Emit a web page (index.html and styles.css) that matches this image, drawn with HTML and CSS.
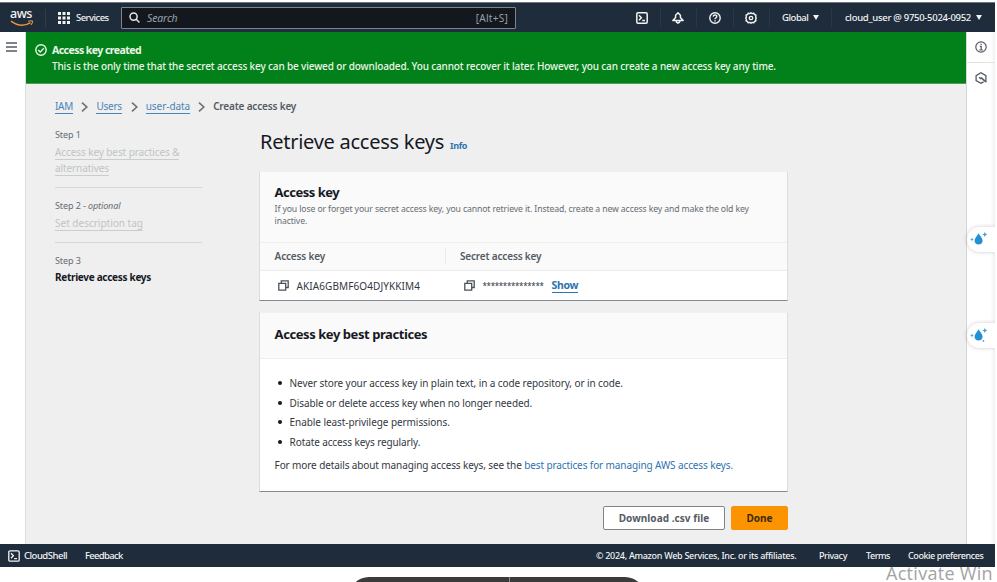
FILE: index.html
```html
<!DOCTYPE html>
<html lang="en">
<head>
<meta charset="utf-8">
<title>Create access key | IAM</title>
<link rel="stylesheet" href="styles.css">
</head>
<body>
<header class="topnav">
  <div class="nav-logo">
    <span class="aws">aws</span>
    <svg class="smile" viewBox="0 0 24 8" width="24" height="8"><path d="M1 1.2Q11 8.5 20.5 2.6" fill="none" stroke="#e8963a" stroke-width="1.6"/><path d="M18 1.2Q21.5.4 22.6 1.2Q22.6 3 21 5" fill="none" stroke="#e8963a" stroke-width="1.1"/></svg>
  </div>
  <div class="nav-services">
    <svg viewBox="0 0 12 12" width="12" height="12" fill="#f2f3f3"><path d="M0 0h3v3H0zM4.5 0h3v3h-3zM9 0h3v3H9zM0 4.5h3v3H0zM4.5 4.5h3v3h-3zM9 4.5h3v3H9zM0 9h3v3H0zM4.5 9h3v3h-3zM9 9h3v3H9z"/></svg>
    <span>Services</span>
  </div>
  <div class="search">
    <svg viewBox="0 0 12 12" width="11" height="11" fill="none" stroke="#e4e8ea" stroke-width="1.6"><circle cx="5" cy="5" r="3.9"/><path d="M7.8 7.8l3.6 3.6"/></svg>
    <span class="search-ph">Search</span>
    <span class="search-key">[Alt+S]</span>
  </div>
  <div class="nav-icon first"><svg viewBox="0 0 12 12" width="12" height="12" fill="none" stroke="#f2f3f3" stroke-width="1.5"><rect x=".8" y=".8" width="10.4" height="10.4" rx="1.2"/><path d="M3 3.3l2.4 2.4L3 8.2M6.2 8.6h2.8"/></svg></div>
  <div class="nav-icon"><svg viewBox="0 0 12 12" width="12" height="12" fill="none" stroke="#f2f3f3" stroke-width="1.5" stroke-linejoin="round"><path d="M6 .8L3.6 3.2V5.400L.9 8.600h10.200L8.400 5.400V3.200z"/><path d="M4.400 9v1.100L6 11.200l1.600-1.100V9"/></svg></div>
  <div class="nav-icon"><svg viewBox="0 0 12 12" width="12" height="12" fill="none" stroke="#f2f3f3" stroke-width="1.4"><circle cx="6" cy="6" r="5.2"/><path d="M4.200 4.600c.1-2.200 3.600-2.200 3.600-.1C7.800 5.800 6 5.700 6 7.200M6 8.200v1.300"/></svg></div>
  <div class="nav-icon"><svg viewBox="0 0 12 12" width="12" height="12" fill="none" stroke="#f2f3f3"><path stroke-width="1.400" stroke-linejoin="round" d="M6 .7l1.200.9 1.600-.4.700 1.300 1.500.7-.4 1.600.7 1.200-.7 1.200.4 1.600-1.500.7-.7 1.300-1.600-.4L6 11.300l-1.200-.9-1.600.4-.7-1.300L1 8.800l.4-1.600L.7 6l.7-1.200L1 3.200l1.500-.7.7-1.300 1.600.4z"/><circle cx="6" cy="6" r="1.700" stroke-width="1.300"/></svg></div>
  <div class="nav-region"><span>Global</span><i class="caret"></i></div>
  <div class="nav-account"><span>cloud_user @ 9750-5024-0952</span><i class="caret"></i></div>
</header>

<div class="shell">
  <aside class="rail-left">
    <svg viewBox="0 0 11 10" width="11" height="10" stroke="#545b64" stroke-width="1.400"><path d="M0 1h11M0 5h11M0 9h11"/></svg>
  </aside>
  <main class="content">
    <section class="flash">
      <svg viewBox="0 0 12 12" width="12" height="12" fill="none" stroke="#e9f7e4" stroke-width="1.400"><circle cx="6" cy="6" r="5.200"/><path d="M3.200 6.100l2 2 3.600-3.900"/></svg>
      <div>
        <div class="flash-title">Access key created</div>
        <div class="flash-text">This is the only time that the secret access key can be viewed or downloaded. You cannot recover it later. However, you can create a new access key any time.</div>
      </div>
    </section>

    <nav class="crumbs">
      <a class="c-iam">IAM</a>
      <svg class="chev" viewBox="0 0 7 10" width="7" height="10"><path d="M1 .7l4.800 4.300L1 9.300"/></svg>
      <a class="c-users">Users</a>
      <svg class="chev" viewBox="0 0 7 10" width="7" height="10"><path d="M1 .7l4.800 4.300L1 9.300"/></svg>
      <a class="c-user">user-data</a>
      <svg class="chev" viewBox="0 0 7 10" width="7" height="10"><path d="M1 .7l4.800 4.300L1 9.300"/></svg>
      <span class="c-here">Create access key</span>
    </nav>

    <div class="columns">
      <ol class="steps">
        <li>
          <div class="step-no">Step 1</div>
          <div class="step-link"><span>Access key best practices &amp;<br>alternatives</span></div>
        </li>
        <li>
          <div class="step-no">Step 2 - <em>optional</em></div>
          <div class="step-link tag"><span>Set description tag</span></div>
        </li>
        <li>
          <div class="step-no">Step 3</div>
          <div class="step-now">Retrieve access keys</div>
        </li>
      </ol>

      <div class="panel">
        <div class="title-row"><h1>Retrieve access keys</h1><a>Info</a></div>

        <section class="card keys">
          <div class="keys-head">
            <h2>Access key</h2>
            <p>If you lose or forget your secret access key, you cannot retrieve it. Instead, create a new access key and make the old key<br>inactive.</p>
          </div>
          <div class="row th"><div class="col-a">Access key</div><div class="col-b">Secret access key</div></div>
          <div class="row td">
            <div class="col-a">
              <svg class="copy" viewBox="0 0 11 11" width="11" height="11"><path d="M3.300 3V.8h6.900v6.700H8M.8 3.300h6.900v6.900H.8z"/></svg>
              <span class="key-id">AKIA6GBMF6O4DJYKKIM4</span>
            </div>
            <div class="col-b">
              <svg class="copy" viewBox="0 0 11 11" width="11" height="11"><path d="M3.300 3V.8h6.900v6.700H8M.8 3.300h6.900v6.900H.8z"/></svg>
              <span class="mask">***************</span>
              <a class="show">Show</a>
            </div>
          </div>
        </section>

        <section class="card practices">
          <h2>Access key best practices</h2>
          <div class="practices-body">
            <ul>
              <li class="p1">Never store your access key in plain text, in a code repository, or in code.</li>
              <li>Disable or delete access key when no longer needed.</li>
              <li class="p3">Enable least-privilege permissions.</li>
              <li>Rotate access keys regularly.</li>
            </ul>
            <p>For more details about managing access keys, see the <a>best practices for managing AWS access keys.</a></p>
          </div>
        </section>

        <div class="actions"><button class="btn">Download .csv file</button><button class="btn primary">Done</button></div>
      </div>
    </div>
  </main>
  <aside class="rail-right">
    <div class="rail-cell"><svg viewBox="0 0 12 12" width="12" height="12" fill="none" stroke="#545b64" stroke-width="1.200"><circle cx="6" cy="6" r="5.200"/><path d="M4.800 5.300H6.200V9M4.300 9h3.600M6.100 2.700v1.400"/></svg></div>
    <div class="rail-cell last"><svg viewBox="0 0 12 12" width="12" height="12" fill="none" stroke="#545b64" stroke-width="1.300"><path d="M10.900 10.200V3.600L6 .8 1.100 3.600v4.900L6 11.200l2.600-1.300"/><path d="M4.200 5.200L6 7M6 5.600l4.900 4.200" stroke-width="1.600"/></svg></div>
    <div class="bubble b1"><svg viewBox="0 0 18 14" width="18" height="14"><path d="M8.600 1.600C7.100 4 4.600 6.300 4.600 8.800c0 2.400 1.600 3.700 4 3.700s4-1.300 4-3.700C12.600 6.300 10.100 4 8.600 1.600z" fill="#2490d0"/><path d="M14.800 0l.8 1.700 1.700.8-1.700.8-.8 1.700-.8-1.700-1.700-.8 1.700-.8zM2 5.600l.6 1.300 1.300.6-1.300.6L2 9.400l-.6-1.300L.1 7.500l1.300-.6z" fill="#3e9fd8"/></svg></div>
    <div class="bubble b2"><svg viewBox="0 0 18 14" width="18" height="14"><path d="M8.600 1.600C7.100 4 4.600 6.300 4.600 8.800c0 2.400 1.600 3.700 4 3.700s4-1.300 4-3.700C12.600 6.300 10.100 4 8.600 1.600z" fill="#2490d0"/><path d="M14.800 0l.8 1.700 1.700.8-1.700.8-.8 1.700-.8-1.700-1.700-.8 1.700-.8zM2 5.600l.6 1.300 1.300.6-1.300.6L2 9.400l-.6-1.300L.1 7.500l1.300-.6z" fill="#3e9fd8"/><circle cx="13.400" cy="12.900" r=".9" fill="#3e9fd8"/></svg></div>
  </aside>
</div>

<footer class="foot">
  <svg viewBox="0 0 12 12" width="12" height="12" fill="none" stroke="#f2f3f3" stroke-width="1.300"><rect x=".8" y=".8" width="10.400" height="10.400" rx="1.200"/><path d="M3 3.300l2.400 2.400L3 8.200M6.200 8.600h2.800"/></svg>
  <span class="f-shell">CloudShell</span>
  <span class="f-feedback">Feedback</span>
  <span class="f-copy">© 2024, Amazon Web Services, Inc. or its affiliates.</span>
  <span class="f-privacy">Privacy</span>
  <span class="f-terms">Terms</span>
  <span class="f-cookie">Cookie preferences</span>
</footer>

<div class="below"><div class="pill"></div></div>
<div class="activate">Activate Win</div>
</body>
</html>
```
FILE: styles.css
```css
* { box-sizing: border-box; }
body {
  margin: 0;
  width: 997px;
  height: 582px;
  overflow: hidden;
  position: relative;
  background: #fff;
  color: #16191f;
  font: 10px/16px "Noto Sans", "Open Sans", sans-serif;
  white-space: nowrap;
}
h1, h2, p, ul, ol { margin: 0; padding: 0; font-weight: 400; }
svg { display: block; flex: none; }
a { color: #2e73b0; }

/* top navigation */
.topnav {
  display: flex;
  align-items: center;
  width: 995px;
  height: 30px;
  margin-top: 2px;
  border-top: 1px solid #6d7883;
  background: #1f2c3b;
  color: #f2f3f3;
  font-size: 9.5px;
  font-weight: 500;
}
.nav-logo { width: 46px; height: 18px; padding-left: 10px; border-right: 1px solid #303d4b; }
.aws { display: block; height: 11px; line-height: 9px; font-size: 12.500px; letter-spacing: -.5px; }
.smile { margin-top: 0; }
.nav-services { display: flex; align-items: center; width: 75px; padding-left: 12px; gap: 6px; letter-spacing: -.54px; }
.search {
  display: flex;
  align-items: center;
  width: 395px;
  height: 22px;
  padding: 0 7px 0 7px;
  border: 1px solid #7b8590;
  border-radius: 1px;
  background: #13181f;
}
.search-ph { margin-left: 7px; font-size: 10.500px; font-style: italic; font-weight: 400; letter-spacing: -.14px; color: #9aa1a8; }
.search-key { margin-left: auto; font-size: 10px; font-weight: 400; letter-spacing: .28px; color: #9aa1a8; }
.nav-icon {
  display: flex;
  justify-content: center;
  width: 36.500px;
  height: 18px;
  align-items: center;
  border-right: 1px solid #2b3846;
}
.nav-icon.first { margin-left: 108px; }
.nav-region { display: flex; align-items: center; width: 62px; height: 18px; padding-left: 12px; border-right: 1px solid #2b3846; letter-spacing: -.45px; }
.nav-account { display: flex; align-items: center; padding-left: 13px; letter-spacing: -.290px; }
.caret { width: 0; height: 0; margin-left: 5px; border: 3px solid transparent; border-top: 5px solid #f2f3f3; border-bottom: 0; }

/* page shell */
.shell { display: flex; width: 995px; height: 512px; }
.rail-left { width: 26px; padding: 10px 0 0 6px; border-right: 1px solid #dcdddd; }
.content { width: 940px; background: #efefef; }
.flash {
  display: flex;
  height: 52px;
  padding: 10px 0 0 9px;
  gap: 5px;
  background: #02811a;
  color: #ecf6e8;
  border-bottom: 1px solid #4f9e57;
}
.flash svg { margin-top: 2px; }
.flash-title { font-size: 10.500px; font-weight: 700; letter-spacing: -.54px; }
.flash-text { font-weight: 500; letter-spacing: -.141px; }

.crumbs { display: flex; align-items: center; height: 16px; margin: 15px 0 0 29px; color: #545b64; }
.crumbs a, .show { line-height: 13px; border-bottom: 1px solid; }
.crumbs a { color: #4a84b8; }
.c-iam { width: 18px; letter-spacing: -.29px; }
.c-users { width: 26px; letter-spacing: -.23px; }
.c-user { width: 44px; letter-spacing: -.06px; }
.c-here { position: relative; top: -1px; font-weight: 600; letter-spacing: -.17px; }
.chev { margin: 0 8.200px; fill: none; stroke: #6a7078; stroke-width: 1.600; }

/* wizard columns */
.columns { display: flex; }
.steps { width: 147px; margin-left: 29px; list-style: none; padding-top: 12px; }
.steps li { border-bottom: 1px solid #d5d8d8; }
.steps li:nth-child(1) { height: 61px; }
.steps li:nth-child(2) { height: 55px; }
.steps li:nth-child(3) { border: 0; }
.steps li + li { padding-top: 10px; }
.step-no { height: 16px; font-size: 9px; letter-spacing: -.1px; color: #666c72; }
.step-link { color: #c0c4c5; letter-spacing: -.09px; margin-top: 1px; }
.step-link.tag { letter-spacing: 0; }
.step-link span { line-height: 13px; border-bottom: 1px solid #c9cdcd; }
.step-now { font-weight: 700; letter-spacing: -.3px; }

.panel { width: 528px; margin-left: 58px; }
.title-row { display: flex; align-items: baseline; height: 56px; padding-top: 14px; }
h1 { font-size: 20px; line-height: 26px; letter-spacing: -.26px; }
.title-row a { margin-left: 6px; font-size: 9px; font-weight: 700; letter-spacing: -.37px; }

.card { background: #fff; border: 1px solid #dcdede; border-top-color: #f1f1f1; border-bottom: 1px solid #858b93; }
.card h2 { font-size: 13px; font-weight: 700; line-height: 18px; letter-spacing: -.43px; }
.keys { height: 130px; margin-left: -1px; width: 529px; }
.keys-head { height: 71px; padding: 11px 14.600px 0; background: #fafafa; border-bottom: 1px solid #efefef; }
.keys-head h2 { letter-spacing: -.51px; }
.keys-head p { margin-top: 2px; font-size: 8.700px; line-height: 12px; letter-spacing: -.127px; color: #666c72; }
.row { display: flex; align-items: center; height: 28px; }
.col-a { width: 186px; padding-left: 14.600px; }
.th { background: #fafafa; border-bottom: 1px solid #ececec; font-weight: 600; color: #545b64; letter-spacing: -.17px; }
.th .col-a { border-right: 1px solid #eaeded; }
.th .col-b { padding-left: 14px; }
.th > div { margin-top: -2px; }
.td > div { display: flex; align-items: center; }
.td { height: 29px; color: #33383f; }
.td .col-a { padding-left: 18px; }
.td .col-b { padding-left: 18px; }
.copy { fill: none; stroke: #4a5058; stroke-width: 1.300; }
.key-id { margin-left: 7.600px; letter-spacing: .09px; }
.mask { margin-left: 7.500px; width: 62px; font-size: 8px; letter-spacing: -.34px; padding-top: 1px; }
.show { margin-left: 7px; font-size: 10.500px; font-weight: 700; letter-spacing: -.36px; }

.practices { height: 180px; margin: 11px 0 0 -1px; width: 529px; }
.practices h2 { height: 46px; padding: 12px 14.600px 0; background: #fafafa; border-bottom: 1px solid #efefef; }
.practices-body { padding: 14px 14.600px 0; color: #33383f; letter-spacing: -.11px; }
.practices ul { list-style: none; }
.practices li { display: flex; align-items: center; height: 19.700px; }
.practices li::before { content: ""; width: 4px; height: 4px; margin: 0 8px 0 3px; border-radius: 50%; background: #16191f; }
.practices .p1 { letter-spacing: -.09px; }
.practices .p3 { letter-spacing: -.07px; }
.practices p { margin-top: 5px; }

.actions { display: flex; justify-content: flex-end; gap: 6px; margin-top: 14px; }
.btn {
  width: 122px;
  height: 24px;
  padding: 0;
  border: 1px solid #7d848c;
  border-radius: 2px;
  background: #fff;
  color: #545b64;
  font: 700 10px/20px "Noto Sans", sans-serif;
  letter-spacing: .05px;
}
.btn.primary { width: 57px; border-color: #fb9400; background: #fb9400; color: #3a2a12; }

/* right rail */
.rail-right { position: relative; width: 29px; border-left: 1px solid #d5d8d8; background: linear-gradient(90deg, #fff 84%, #f1f1f1); }
.rail-cell { display: flex; align-items: center; justify-content: center; height: 31px; border-bottom: 1px solid #e2e4e4; }
.rail-cell.last { height: 29px; border: 0; }
.bubble {
  position: absolute;
  left: 0;
  width: 28px;
  height: 25px;
  padding: 5px 0 0 3px;
  border-radius: 13px 0 0 13px;
  background: #fff;
  box-shadow: 0 0 4px rgba(0, 0, 0, .2);
  clip-path: inset(-5px 0 -5px -5px);
}
.b1 { top: 195px; }
.b2 { top: 291px; }

/* footer */
.foot {
  display: flex;
  align-items: center;
  width: 995px;
  height: 23px;
  padding-left: 8px;
  background: #1f2c3b;
  color: #f2f3f3;
  font-size: 9px;
  font-weight: 500;
}
.f-shell { width: 61px; margin-left: 4px; font-size: 9.500px; letter-spacing: -.5px; }
.f-feedback { font-size: 9.500px; letter-spacing: -.7px; }
.f-copy { width: 223px; margin-left: auto; letter-spacing: -.29px; }
.f-privacy { width: 47px; letter-spacing: -.4px; }
.f-terms { width: 42px; letter-spacing: -.46px; }
.f-cookie { width: 87px; letter-spacing: -.41px; }

/* desktop behind the window */
.below { height: 15px; overflow: hidden; }
.pill { width: 296px; height: 40px; margin: 10px 0 0 349px; border-radius: 20px; background: linear-gradient(90deg, transparent 160px, #8a8a8a 160px, #8a8a8a 161px, transparent 161px) #3b3b3b; }
.activate { position: absolute; left: 886px; top: 562px; font-family: "Open Sans", sans-serif; font-size: 18px; line-height: 22px; font-weight: 400; letter-spacing: .3px; color: #a3a3a3; }
```
